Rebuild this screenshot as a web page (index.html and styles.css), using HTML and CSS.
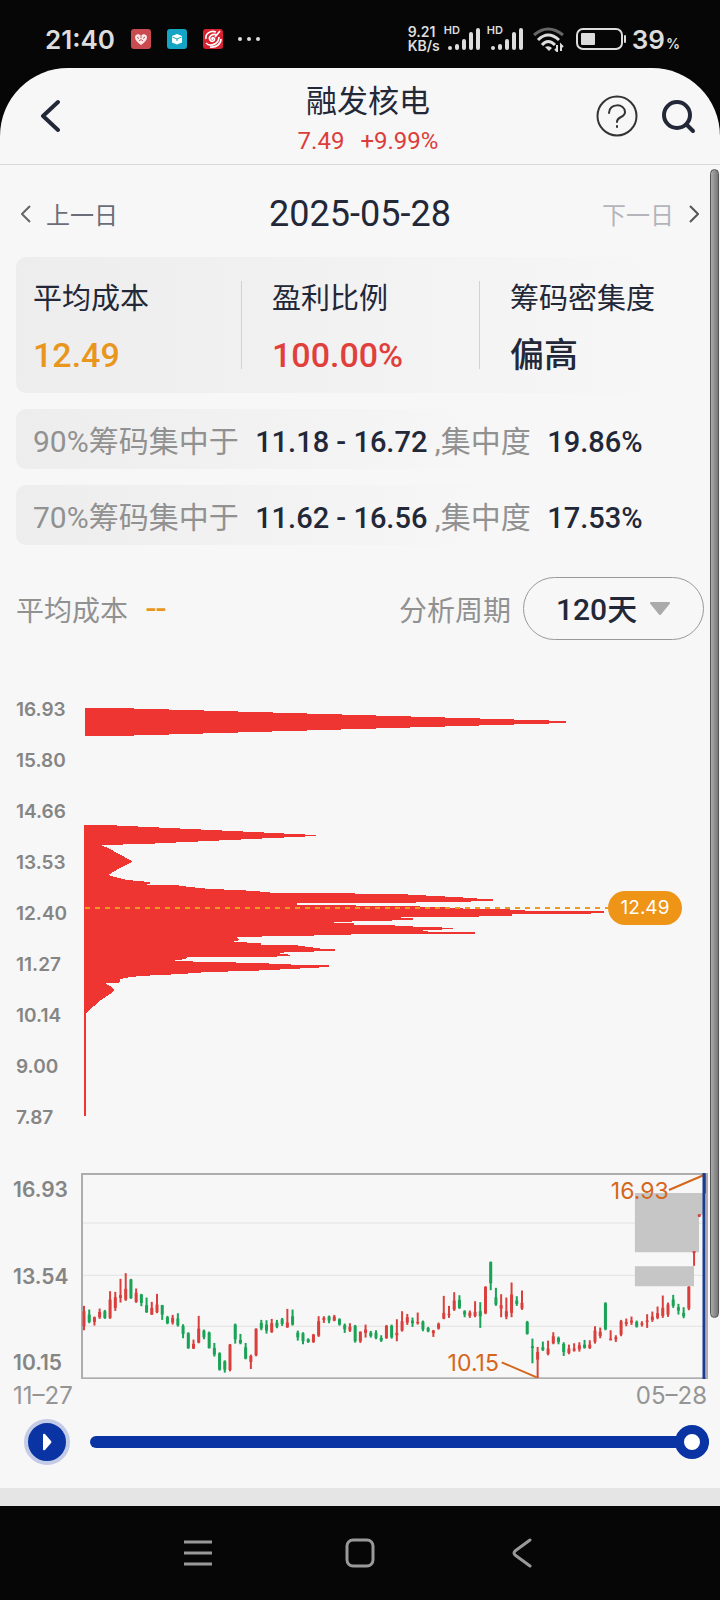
FILE: index.html
```
<!DOCTYPE html>
<html lang="zh-CN">
<head>
  <meta charset="UTF-8" />
  <meta name="viewport" content="width=device-width, initial-scale=1.0"/>
  <title>融发核电</title>
  <link rel="stylesheet" href="styles.css">
</head>
<body>
  <div class="status-bar">
    <span class="clock">21:40</span>
    <div class="app-icons">
      <svg width="20" height="20" viewBox="0 0 20 20">
        <rect width="20" height="20" rx="3" fill="#c94b50"/>
        <path d="M10 16C6 13 4 11 4 8.500C4 5.500 8 4 10 7C12 4 16 5.500 16 8.500C16 11 14 13 10 16Z" fill="#fbe9e9"/>
        <path d="M6 8l2 1.500M14 8l-2 1.500M8 12l2-1.500 2 1.500M10 7v2" stroke="#c94b50" fill="none"/>
      </svg>
      <svg width="20" height="20" viewBox="0 0 20 20">
        <rect width="20" height="20" rx="3" fill="#15a5c4"/>
        <path d="M10 5l5 2v6.500l-5 2-5-2V7z" fill="#fff"/>
        <path d="M5.500 8l4.500 2 4.500-2M10 10v2" stroke="#15a5c4" fill="none"/>
      </svg>
      <svg width="20" height="20" viewBox="0 0 20 20">
        <rect width="20" height="20" rx="3" fill="#d92231"/>
        <path d="M13 3C7 1 2 5 3 10M17 2l-5 6M14 6C9 4 5 8 7 11C9 14 13 11 11 9C9 8 8 11 10 10M3 14c5 5 13 0 13-6M7 18c6 1 11-3 11-8" stroke="#fff" stroke-width="1.700" fill="none"/>
      </svg>
    </div>
    <svg class="dots" width="22" height="6" viewBox="0 0 22 6" fill="#ddd">
      <circle cx="2" cy="3" r="2"/><circle cx="11" cy="3" r="2"/><circle cx="20" cy="3" r="2"/>
    </svg>

    <div class="status-right">
      <span class="speed">9.21<br>KB/s</span>
      <div class="signal">
        <span>HD</span>
        <svg width="37" height="24" viewBox="0 0 37 24" stroke="#ddd" stroke-width="4" stroke-linecap="round">
          <path d="M6 21v0M13 19v2M20 14v7M27 7v14M34 3v18"/>
        </svg>
      </div>
      <div class="signal">
        <span>HD</span>
        <svg width="37" height="24" viewBox="0 0 37 24" stroke="#ddd" stroke-width="4" stroke-linecap="round">
          <path d="M6 21v0M13 19v2M20 14v7M27 7v14M34 3v18"/>
        </svg>
      </div>
      <svg class="wifi" width="34" height="26" viewBox="0 0 34 26" fill="none" stroke="#ddd" stroke-width="3">
        <path d="M2 9Q16 -3 31 9" stroke="#666"/>
        <path d="M6 14Q16 4 27 14"/>
        <path d="M10 19Q16 12 23 19"/>
        <path d="M13 21l4 4 3-3q-3-3-7-1z" fill="#ddd" stroke="none"/>
        <path d="M25 19v6l-2-2M29 25v-6l2 2" stroke-width="2"/>
      </svg>
      <svg class="battery" width="51" height="22" viewBox="0 0 51 22">
        <rect x="1" y="1" width="45" height="20" rx="6" fill="none" stroke="#ddd" stroke-width="2"/>
        <rect x="5" y="5" width="14" height="12" rx="1" fill="#ddd"/>
        <path d="M49 8v6" stroke="#ddd" stroke-width="2" stroke-linecap="round"/>
      </svg>
      <span class="level">39<small>%</small></span>
    </div>
  </div>

  <div class="app">
    <header>
      <button class="icon-btn back" aria-label="返回">
        <svg width="20" height="34" viewBox="0 0 20 34" fill="none" stroke="#232838" stroke-width="4" stroke-linecap="round" stroke-linejoin="round">
          <path d="M18 3L3 17l15 14"/>
        </svg>
      </button>
      <div class="stock">
        <h1>融发核电</h1>
        <p><span>7.49</span><span>+9.99%</span></p>
      </div>
      <div class="tools">
        <button class="icon-btn" aria-label="帮助">
          <svg width="42" height="42" viewBox="0 0 42 42" fill="none" stroke="#333" stroke-width="2" stroke-linecap="round">
            <circle cx="21" cy="21" r="19.500"/>
            <path d="M13 18C13 8 29 8 29 17C29 23 21 21 21 27"/>
            <path d="M21 31v1"/>
          </svg>
        </button>
        <button class="icon-btn" aria-label="搜索">
          <svg width="36" height="36" viewBox="0 0 36 36" fill="none" stroke="#232838" stroke-width="4" stroke-linecap="round">
            <circle cx="17" cy="17" r="13"/>
            <path d="M27 27l6 6"/>
          </svg>
        </button>
      </div>
    </header>

    <main>
      <div class="date-nav">
        <button class="day">
          <svg width="10" height="18" viewBox="0 0 10 18" fill="none" stroke="#666" stroke-width="2"><path d="M9 1L1 9l8 8"/></svg>
          <span>上一日</span>
        </button>
        <h2>2025-05-28</h2>
        <button class="day next">
          <span>下一日</span>
          <svg width="10" height="18" viewBox="0 0 10 18" fill="none" stroke="#555" stroke-width="2"><path d="M1 1l8 8-8 8"/></svg>
        </button>
      </div>

      <div class="stats">
        <div class="stat">
          <span>平均成本</span>
          <strong class="orange">12.49</strong>
        </div>
        <div class="stat">
          <span>盈利比例</span>
          <strong class="red">100.00%</strong>
        </div>
        <div class="stat">
          <span>筹码密集度</span>
          <strong>偏高</strong>
        </div>
      </div>

      <p class="range-row">90%筹码集中于 <b>11.18 - 16.72</b> ,集中度 <b>19.86%</b></p>
      <p class="range-row">70%筹码集中于 <b>11.62 - 16.56</b> ,集中度 <b>17.53%</b></p>

      <div class="period">
        <span>平均成本</span>
        <span class="dash">--</span>
        <label for="days">分析周期</label>
        <div class="select-box">
          <select id="days">
            <option>120天</option>
          </select>
          <svg width="22" height="14" viewBox="0 0 22 14"><path d="M2 1h18L11 12z" fill="#aaa" stroke="#aaa" stroke-width="2" stroke-linejoin="round"/></svg>
        </div>
      </div>

      <div class="chips">
        <div class="prices">
          <span>16.93</span>
          <span>15.80</span>
          <span>14.66</span>
          <span>13.53</span>
          <span>12.40</span>
          <span>11.27</span>
          <span>10.14</span>
          <span>9.00</span>
          <span>7.87</span>
        </div>
        <div class="chips-plot">
          <svg viewBox="84 700 620 420" preserveAspectRatio="none">
            <g fill="#ef3532" shape-rendering="crispEdges">
              <path d="M85 708H117L566 721V723L117 736H85Z"/>
              <path d="M85 825H106L316 835V836L144 844L101 845L110 849L119 854L132 861V862L120 868L108 875L115 877L127 880L150 882V884H147V885H175L190 887L210 889L237 890L255 891L275 893H345L365 894H408V895H425L426 896L463 897V898H477V899H493V901H471V902H418L414 903H297V905L414 906L425 907H440L470 909H502L532 911H604V913H591V914H512V916H479V917H405L396 918H413V920L370 921L334 922V923H354V925H395V926L430 927L453 928V929L430 930L416 931H428V932H475V934H360L341 935L287 936L237 937V938L240 940L232 942L261 943V945H294L309 947L324 949H335V951L293 952L275 953L285 954L290 955V956L264 957H188L185 959L171 961L214 962L258 963L302 965H329V967L290 969L249 971L207 972L181 974L140 976L131 977L120 979V981L118 983H105L110 986L114 990L110 994L101 1000L94 1006L86 1013V1116H84V825Z"/>
            </g>
            <path d="M85 908H608" stroke="#ec9a22" stroke-width="2" stroke-dasharray="5 5"/>
          </svg>
          <span class="avg-tag">12.49</span>
        </div>
      </div>

      <div class="kline">
        <div class="kline-prices">
          <span>16.93</span>
          <span>13.54</span>
          <span>10.15</span>
        </div>
        <svg viewBox="0 0 626 206">
          <path d="M1 50H625M1 102H625M1 153H625" stroke="#e2e2e2"/>
          <rect x="1" y="1" width="624" height="204" fill="none" stroke="#adadad" stroke-width="2"/>
          <path d="M553 20h68v22h-4v37h-64zM553 93h59v20h-59z" fill="#c6c6c6"/>
          <g id="candles"></g>
          <path d="M587 17L622 2M420 189l35 15" stroke="#d4671c" stroke-width="2"/>
          <text x="529" y="26">16.93</text>
          <text x="366" y="198">10.15</text>
          <path d="M622 0V206" stroke="#1b3b92" stroke-width="3"/>
        </svg>
      </div>
      <div class="dates">
        <span>11–27</span>
        <span>05–28</span>
      </div>

      <div class="player">
        <button class="play" aria-label="播放">
          <svg width="10" height="18" viewBox="0 0 10 18"><path d="M1 2q0-2 2-1l6 7q1 1 0 2l-6 7q-2 1-2-1z" fill="#fff"/></svg>
        </button>
        <input type="range" min="0" max="119" value="119" aria-label="日期">
      </div>
    </main>
    <div class="scrollbar"></div>
  </div>

  <nav>
    <button class="icon-btn" aria-label="菜单">
      <svg width="30" height="30" viewBox="0 0 30 30" stroke="#999" stroke-width="3"><path d="M1 4h28M1 15h28M1 26h28"/></svg>
    </button>
    <button class="icon-btn" aria-label="主页">
      <svg width="30" height="30" viewBox="0 0 30 30" fill="none" stroke="#999" stroke-width="3"><rect x="2" y="2" width="26" height="26" rx="6"/></svg>
    </button>
    <button class="icon-btn" aria-label="返回">
      <svg width="30" height="30" viewBox="0 0 30 30" fill="none" stroke="#999" stroke-width="3" stroke-linecap="round" stroke-linejoin="round"><path d="M23 2L8 13q-2 2 0 4l15 11"/></svg>
    </button>
  </nav>

  <script src="chart.js"></script>
</body>
</html>
```

FILE: styles.css
```
* {
  box-sizing: border-box;
}

body {
  margin: 0;
  background: #060606;
  color: #232838;
  font-family: Roboto, "Noto Sans CJK SC", sans-serif;
}

h1, h2, p {
  margin: 0;
  font-weight: normal;
}

button {
  padding: 0;
  border: none;
  background: none;
  font-family: inherit;
  cursor: pointer;
}

svg {
  display: block;
  flex-shrink: 0;
}

/* status bar */
.status-bar {
  display: flex;
  align-items: center;
  height: 68px;
  padding: 10px 40px 0 45px;
  color: #ddd;
  font-family: Inter, sans-serif;
}

.clock {
  width: 86px;
  font-size: 26px;
  font-weight: 600;
}

.app-icons {
  display: flex;
  gap: 16px;
}

.dots {
  margin-left: 15px;
}

.status-right {
  display: flex;
  align-items: center;
  margin-left: auto;
}

.speed {
  margin-right: 4px;
  font-size: 14px;
  line-height: 14px;
  font-weight: 600;
}

.signal {
  position: relative;
  margin-right: 6px;
}

.signal span {
  position: absolute;
  top: -3px;
  left: 0;
  font-size: 11px;
  line-height: 12px;
  font-weight: 600;
}

.wifi {
  margin: 0 10px 0 2px;
}

.level {
  margin-left: 5px;
  font-size: 26px;
  font-weight: 600;
}

.level small {
  margin-left: 1px;
  font-size: 14px;
}

/* app */
.app {
  position: relative;
  background: #f7f7f7;
  border-radius: 68px 68px 0 0;
  border-bottom: 18px solid #e5e5e5;
}

header {
  display: grid;
  grid-template-columns: 1fr auto 1fr;
  align-items: center;
  height: 97px;
  padding: 0 24px 0 40px;
  border-bottom: 1px solid #d8d8d8;
}

.back {
  justify-self: start;
}

.stock {
  padding-top: 10px;
  text-align: center;
}

h1 {
  font-size: 31px;
  line-height: 40px;
}

.stock p {
  display: flex;
  justify-content: center;
  gap: 16px;
  color: #dc3d3a;
  font-size: 24px;
  line-height: 38px;
}

.tools {
  display: flex;
  align-items: center;
  justify-self: end;
  gap: 22px;
}

main {
  padding: 0 16px;
}

.date-nav {
  display: flex;
  align-items: center;
  justify-content: space-between;
  height: 92px;
  padding: 6px 5px 0;
}

h2 {
  font-size: 36px;
  line-height: 48px;
}

.day {
  display: flex;
  align-items: center;
  gap: 15px;
  color: #6b6e78;
  font-size: 24px;
  line-height: 30px;
}

.day span {
  padding-top: 4px;
}

.next {
  color: #b4b5ba;
}

.stats {
  display: grid;
  grid-template-columns: 225fr 238fr 225fr;
  padding: 24px 0;
  border-radius: 10px;
  background: linear-gradient(to right, #ededed, #f7f7f7);
}

.stat {
  display: flex;
  flex-direction: column;
  height: 88px;
  padding-left: 30px;
  border-left: 1px solid #d2d2d2;
  font-size: 29px;
  line-height: 36px;
  white-space: nowrap;
}

.stat:first-child {
  padding-left: 17px;
  border: none;
}

.stat strong {
  margin-top: 17px;
  font-size: 34px;
  line-height: 42px;
  font-weight: 500;
}

.stat .orange, .dash {
  color: #e8961e;
}

.stat .red {
  color: #e03f3b;
}

.range-row {
  margin-top: 16px;
  padding: 6px 17px 0;
  border-radius: 10px;
  background: linear-gradient(to right, #ededed, #f7f7f7 70%);
  color: #919191;
  font-size: 30px;
  line-height: 54px;
  white-space: nowrap;
}

.range-row b {
  margin-left: 9px;
  color: #232838;
  font-size: 29px;
  font-weight: 500;
}

.period {
  display: flex;
  align-items: center;
  margin-top: 32px;
  color: #919191;
  font-size: 28px;
}

.dash {
  margin-left: 18px;
  font-size: 36px;
}

.period label {
  margin-left: auto;
}

.select-box {
  position: relative;
  margin-left: 12px;
}

select {
  display: block;
  width: 181px;
  height: 63px;
  padding: 2px 32px 0;
  appearance: none;
  border: 1px solid #999;
  border-radius: 32px;
  background: none;
  color: #232838;
  font-family: inherit;
  font-size: 30px;
  font-weight: 500;
}

.select-box svg {
  position: absolute;
  top: 25px;
  right: 33px;
}

/* chip distribution */
.chips {
  display: flex;
  margin-top: 44px;
  color: #858585;
  font-family: Inter, sans-serif;
}

.prices {
  display: flex;
  flex-direction: column;
  width: 68px;
  font-size: 19px;
  line-height: 51px;
  font-weight: 600;
}

.chips-plot {
  position: relative;
  flex: 1;
  padding-top: 16px;
}

.chips-plot svg {
  width: 100%;
  height: 420px;
}

.avg-tag {
  position: absolute;
  top: 207px;
  right: 22px;
  width: 74px;
  border-radius: 17px;
  background: #ee9417;
  color: #fff;
  font-size: 19px;
  line-height: 34px;
  text-align: center;
}

/* k line */
.kline {
  display: flex;
  margin: 30px -4px 0 -4px;
  font-family: Inter, sans-serif;
}

.kline-prices {
  display: flex;
  flex-direction: column;
  justify-content: space-between;
  width: 69px;
  padding: 4px 0 3px 1px;
  color: #858585;
  font-size: 21px;
  line-height: 26px;
  font-weight: 600;
}

.kline svg {
  flex: 1;
  min-width: 0;
}

.kline text {
  fill: #d4671c;
  font-size: 23px;
}

.dates {
  display: flex;
  justify-content: space-between;
  margin: 0 -3px;
  color: #959595;
  font-family: Inter, sans-serif;
  font-size: 24px;
  line-height: 34px;
}

.player {
  display: flex;
  align-items: center;
  gap: 20px;
  margin: 6px -5px 0 8px;
  padding-bottom: 23px;
}

.play {
  display: flex;
  align-items: center;
  justify-content: center;
  width: 46px;
  height: 46px;
  border: 4px solid #c3cbe6;
  border-radius: 50%;
  background: #0a34a4;
}

input[type=range] {
  flex: 1;
  height: 36px;
  margin: 0;
  appearance: none;
  background: none;
}

input::-webkit-slider-runnable-track {
  height: 12px;
  border-radius: 6px;
  background: #0a34a4;
}

input::-webkit-slider-thumb {
  appearance: none;
  width: 34px;
  height: 34px;
  margin-top: -11px;
  border: 9px solid #0a34a4;
  border-radius: 50%;
  background: #fff;
}

.scrollbar {
  position: absolute;
  top: 101px;
  right: 1px;
  width: 9px;
  height: 1149px;
  border: 1px solid #555;
  border-radius: 5px;
  background: linear-gradient(to right, #aaa, #777);
}

nav {
  display: flex;
  align-items: center;
  justify-content: center;
  gap: 132px;
  height: 94px;
}
```

FILE: chart.js
```
// one candle per day: direction, high, body top, body bottom, low
const days = `
r 434 450 495 507,g 445 460 482 486,r 466 468 482 493,r 442 452 468 473,g 446 450 470 473,r 390 415 470 473
r 392 408 440 449,r 353 402 410 424,r 336 383 415 419,g 353 355 411 413,r 382 395 422 425,g 398 400 425 435
g 409 432 453 455,r 422 440 460 461,r 398 430 453 456,g 431 432 460 476,g 464 468 486 489,r 461 470 484 490
g 456 472 492 496,g 489 494 518 531,g 513 516 560 563,r 535 548 562 563,r 464 502 544 546,g 505 508 528 534
g 511 514 560 562,g 545 560 580 586,g 573 576 625 628,g 597 600 625 634,r 548 550 626 630,g 487 490 534 547
g 518 536 546 549,g 545 558 592 594,r 580 584 602 623,r 501 503 582 585,g 476 485 502 507,g 477 490 508 517
r 473 486 512 515,g 476 484 496 501,g 470 474 488 494,r 443 484 498 500,g 445 465 490 493,g 508 514 528 538
g 513 516 540 549,g 531 534 542 545,r 518 520 542 545,r 465 480 523 527,r 465 470 476 485,g 463 466 478 486
r 461 466 478 480,g 471 474 490 493,g 487 492 504 515,r 486 496 508 512,g 491 494 540 544,r 510 512 540 545
r 490 505 515 529,g 509 514 524 529,g 507 514 530 534,g 522 530 538 542,r 491 494 530 533,g 490 494 528 532
r 474 515 522 540,r 450 480 508 511,r 458 468 484 491,g 469 478 486 497,r 454 482 486 490,g 478 481 504 510
g 497 500 510 513,r 506 508 516 527,r 484 488 502 505,r 404 455 472 474,r 434 458 462 470,r 393 418 445 449
g 402 416 440 443,g 447 450 460 468,r 448 454 464 470,r 420 452 464 468,g 423 450 465 500,r 375 377 456 459
g 301 303 366 387,g 380 408 430 434,r 399 432 442 468,r 409 450 466 474,r 364 400 455 468,g 405 418 428 434
r 388 425 442 446,g 479 482 518 520,g 532 555 560 606,r 557 572 595 650,g 541 558 566 569,r 538 562 578 582
r 513 525 546 549,g 526 530 542 549,g 543 548 572 584,r 550 562 575 579,r 546 562 568 571,r 543 552 564 571
g 536 550 560 562,r 537 550 560 563,r 495 508 542 547,r 499 512 524 531,g 423 426 504 507,r 507 532 536 538
r 522 528 534 542,r 476 480 520 525,r 472 482 488 495,r 466 478 484 491,g 478 482 496 499,r 480 486 490 496
r 459 478 482 500,r 451 466 476 482,r 436 456 470 474,r 403 440 464 470,r 424 430 460 467,g 401 415 434 440
g 428 438 448 460,g 438 455 465 471,r 375 377 442 447,r 270 270 276 314,r 160 160 166 168,r 39 40 96 98
`.trim().split(/[,\n]/);

const y = v => (v - 36) / 3;
const step = 619.5 / (days.length - 1);

document.getElementById("candles").innerHTML = days.map((day, i) => {
  const [dir, high, top, bottom, low] = day.split(" ");
  const color = dir === "r" ? "#d9403d" : "#1aa356";
  const x = 3 + i * step;
  return `<path d="M${x} ${y(high)}V${y(low)}" stroke="${color}" stroke-width="2"/>
    <path d="M${x} ${y(top)}V${y(bottom)}" stroke="${color}" stroke-width="3"/>`;
}).join("");
```
